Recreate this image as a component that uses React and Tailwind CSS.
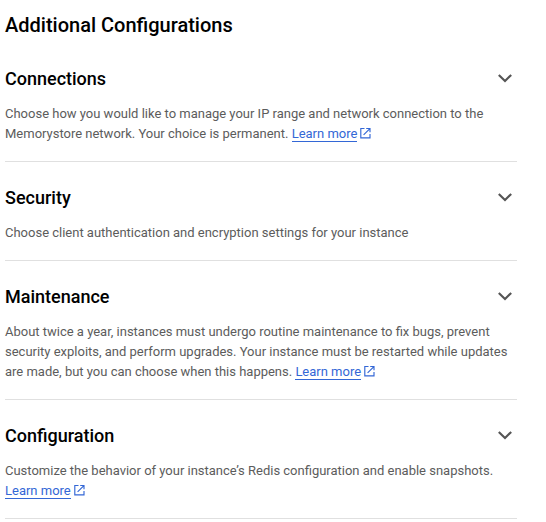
const sections = [
  { title: "Connections", lines: ["Choose how you would like to manage your IP range and network connection to the", "Memorystore network. Your choice is permanent. "], link: true },
  { title: "Security", lines: ["Choose client authentication and encryption settings for your instance"] },
  { title: "Maintenance", lines: ["About twice a year, instances must undergo routine maintenance to fix bugs, prevent", "security exploits, and perform upgrades. Your instance must be restarted while updates", "are made, but you can choose when this happens. "], link: true },
  { title: "Configuration", lines: ["Customize the behavior of your instance’s Redis configuration and enable snapshots.", ""], link: true },
];

function LearnMore() {
  return (
    <a className="text-[#3367d6]">
      <span className="border-b border-[#3367d6]">Learn more</span>
      <svg className="ml-[2px] -mt-[3px] inline-block size-[13px] align-middle" viewBox="0 0 13 13" fill="none" stroke="currentColor" strokeWidth="1.15">
        <path d="M5.5 1.5H1.8V10.8H11V7M7.2 1.5H11V5.3M10.9 1.6L4.6 7.9" />
      </svg>
    </a>
  );
}

function Section({ title, lines, link }) {
  return (
    <section className="border-b border-[#e0e0e0] pt-6 pb-[17px]">
      <div className="flex h-6 items-center justify-between">
        <h2 className="text-[18px] leading-6 font-medium text-black">{title}</h2>
        <svg className="-mt-[2px] size-6" viewBox="0 0 24 24" fill="none" stroke="#555" strokeWidth="2.1">
          <path d="M5.8 8.9 12 15.1 18.2 8.9" />
        </svg>
      </div>
      <p className="mt-[13px] text-[13px] leading-5 tracking-[-0.006px] whitespace-nowrap text-[#5c5c5c] [font-feature-settings:'liga']">
        {lines.map((line, i) => (
          <span key={i} className="block h-5">
            {line}
            {link && i === lines.length - 1 && <LearnMore />}
          </span>
        ))}
      </p>
    </section>
  );
}

export default function App() {
  return (
    <main className="h-[522px] overflow-hidden bg-white pt-3 pl-[5px] font-[Roboto,sans-serif]">
      <h1 className="h-[31px] text-[20px] leading-[26px] font-medium text-black">Additional Configurations</h1>
      <div className="w-[512px]">
        {sections.map((s) => (
          <Section key={s.title} {...s} />
        ))}
      </div>
    </main>
  );
}
